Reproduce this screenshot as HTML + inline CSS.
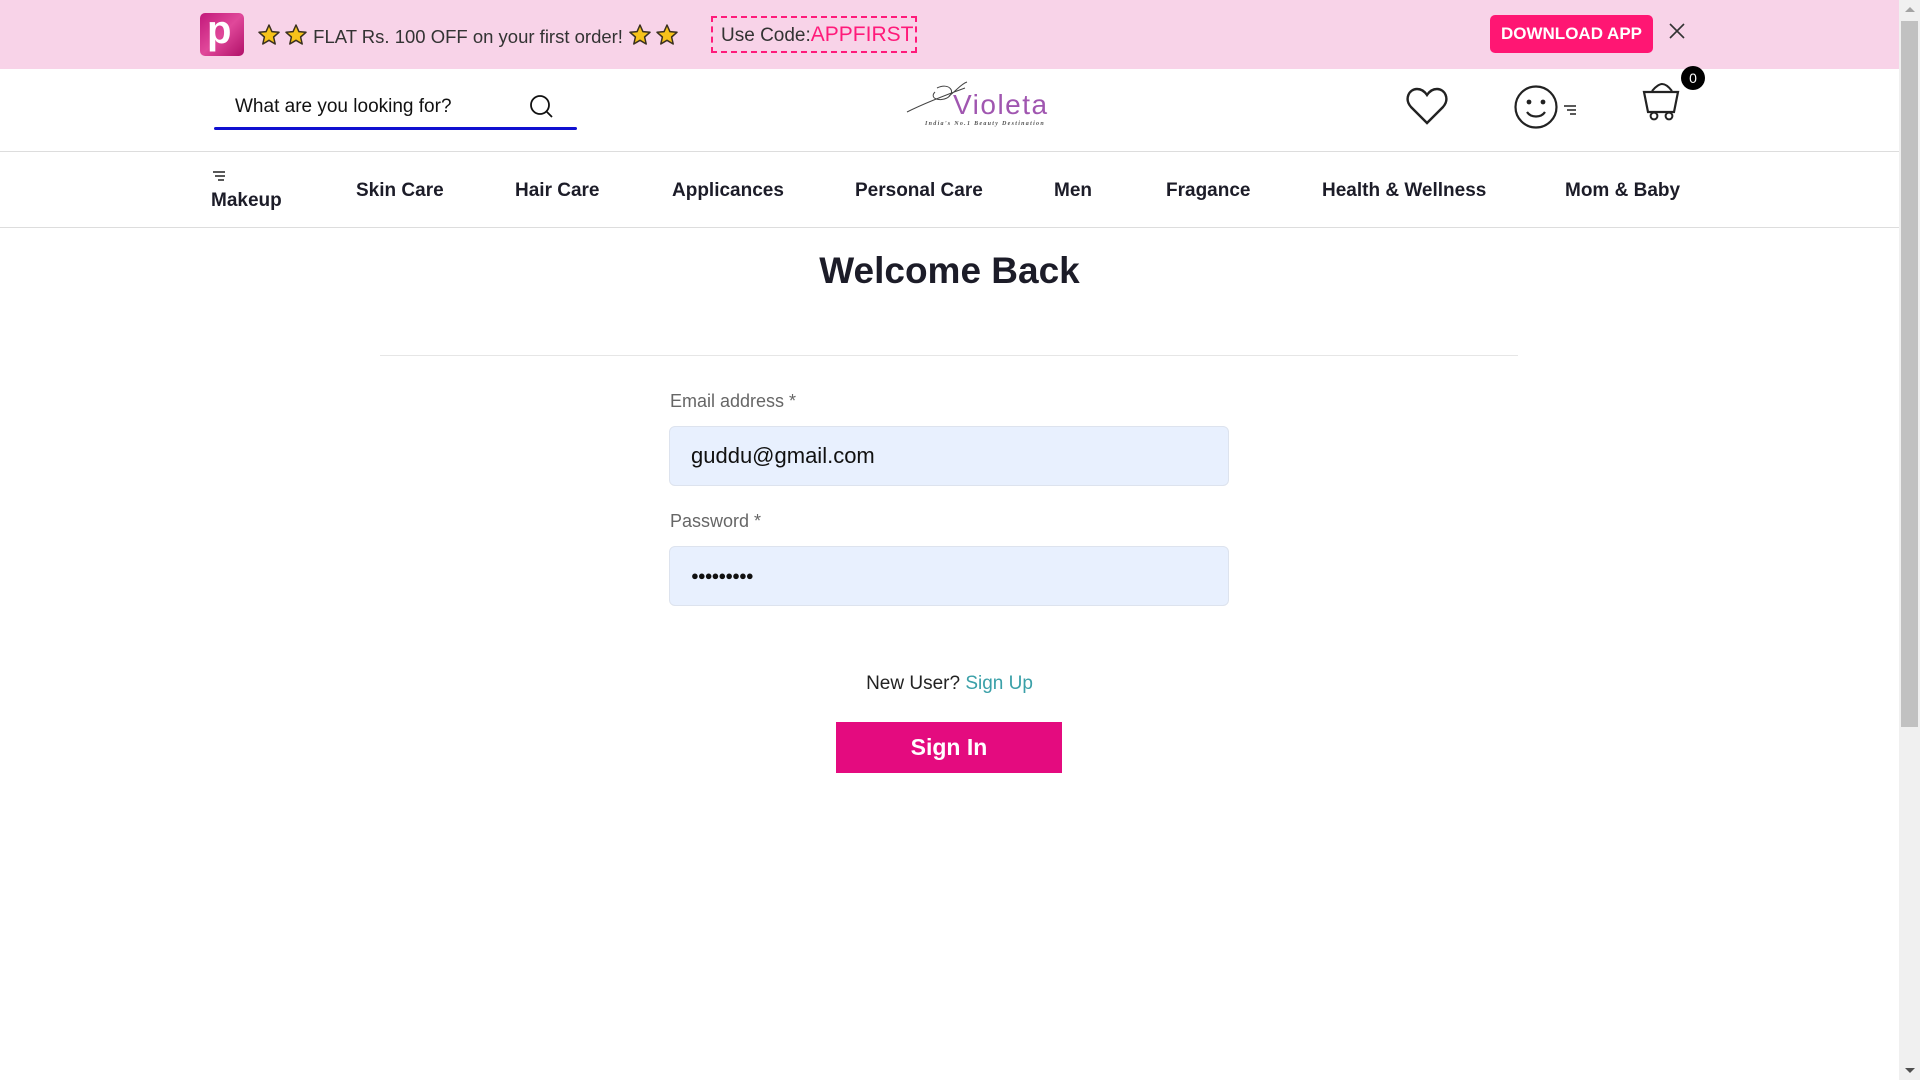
<!DOCTYPE html>
<html><head><meta charset="utf-8"><style>
*{margin:0;padding:0;box-sizing:border-box}
body{width:1920px;height:1080px;overflow:hidden;background:#fff;font-family:"Liberation Sans",sans-serif;color:#212529;position:relative}
.a{position:absolute;white-space:nowrap}
.nav{font-weight:bold;font-size:19px;top:180px;color:#1c1c28}
.st{display:inline-block;vertical-align:-4px}
</style></head><body>
<svg width="0" height="0" style="position:absolute"><defs><symbol id="s" viewBox="0 0 24 24"><path d="M12 2L14.9 8.6L22 9.3L16.6 14L18.2 21L12 17.3L5.8 21L7.4 14L2 9.3L9.1 8.6Z" fill="#f7c21a" stroke="#3a3020" stroke-width="1.5" stroke-linejoin="round"/></symbol></defs></svg>
<div class="a" style="left:0;top:0;width:1899px;height:69px;background:#f8d3e8"></div>
<div class="a" style="left:200px;top:13px;width:44px;height:43px;border-radius:5px;background:linear-gradient(135deg,#c2187a,#e0489a,#b01068)"></div>
<div class="a" style="left:207px;top:8px;color:#fff;font-weight:bold;font-size:40px">p</div>
<div class="a" style="left:257px;top:23px;font-size:18.5px;color:#333"><svg class="st" width="24" height="24"><use href="#s"/></svg><svg class="st" width="24" height="24" style="margin-left:3px"><use href="#s"/></svg> FLAT Rs. 100 OFF on your first order! <svg class="st" width="24" height="24"><use href="#s"/></svg><svg class="st" width="24" height="24" style="margin-left:3px"><use href="#s"/></svg></div>
<div class="a" style="left:711px;top:16px;width:206px;height:37px;border:2px dashed #ff1a7a;font-size:19px;padding:6px 0 0 8px;color:#333;line-height:22px">Use Code:<span style="color:#ff1a7a;font-size:21px">APPFIRST</span></div>
<div class="a" style="left:1490px;top:15px;width:163px;height:38px;background:#ff1673;border-radius:5px;color:#fff;font-size:17px;font-weight:bold;text-align:center;line-height:38px">DOWNLOAD APP</div>
<svg class="a" style="left:1668px;top:22px" width="18" height="18"><path d="M2 2L16 16M16 2L2 16" stroke="#333" stroke-width="1.6"/></svg>
<div class="a" style="left:0;top:151px;width:1899px;height:1px;background:#ddd"></div>
<div class="a" style="left:235px;top:96px;font-size:19px;color:#111">What are you looking for?</div>
<svg class="a" style="left:528px;top:93px" width="28" height="28"><circle cx="12" cy="12" r="9" fill="none" stroke="#111" stroke-width="1.8"/><path d="M18.5 18.5L24 24" stroke="#111" stroke-width="1.8"/></svg>
<div class="a" style="left:214px;top:127px;width:363px;height:3px;background:#1010d0;border-radius:2px"></div>
<svg class="a" style="left:903px;top:80px" width="170" height="48"><path d="M4 32C20 24 40 16 62 8M34 8C46 2 54 12 44 18C36 22 26 18 32 12M46 16C54 10 58 4 64 2" stroke="#444" fill="none" stroke-width="1"/><text x="50" y="34" font-family="Liberation Sans,sans-serif" font-size="28" fill="#a056b0" letter-spacing="1.5">Violeta</text><text x="22" y="45" font-family="Liberation Serif,serif" font-size="6" font-style="italic" font-weight="bold" fill="#555" letter-spacing="1.3">India's No.1 Beauty Destination</text></svg>
<svg class="a" style="left:1405px;top:85px" width="44" height="42"><path d="M22 38L6 22C-1 14 4 4 12 4C17 4 20 7 22 10C24 7 27 4 32 4C40 4 45 14 38 22Z" fill="none" stroke="#222" stroke-width="2.4"/></svg>
<svg class="a" style="left:1514px;top:85px" width="66" height="44"><circle cx="22" cy="22" r="20.5" fill="none" stroke="#222" stroke-width="2.2"/><circle cx="15" cy="17" r="2.4" fill="#222"/><circle cx="29" cy="17" r="2.4" fill="#222"/><path d="M13 27C17 33 27 33 31 27" fill="none" stroke="#222" stroke-width="2.2"/><path d="M50 21h12M53 25h9M56 29h6" stroke="#222" stroke-width="1.6"/></svg>
<svg class="a" style="left:1640px;top:80px" width="44" height="42"><path d="M4 12H38L34 32H8Z" fill="none" stroke="#222" stroke-width="2.2"/><path d="M12 11C16 6 20 4 22 4C26 4 29 7 32 11" fill="none" stroke="#222" stroke-width="2"/><circle cx="14" cy="36" r="3.4" fill="none" stroke="#222" stroke-width="2"/><circle cx="29" cy="36" r="3.4" fill="none" stroke="#222" stroke-width="2"/></svg>
<div class="a" style="left:1681px;top:66px;width:24px;height:24px;border-radius:50%;background:#000;color:#fff;font-size:14px;text-align:center;line-height:24px">0</div>
<div class="a" style="left:0;top:227px;width:1899px;height:1px;background:#ddd"></div>
<svg class="a" style="left:212px;top:170px" width="16" height="12"><path d="M1 2h12M3 6h10M6 10h6" stroke="#222" stroke-width="1.6"/></svg>
<div class="a nav" style="left:211px;top:190px">Makeup</div>
<div class="a nav" style="left:356px">Skin Care</div>
<div class="a nav" style="left:515px">Hair Care</div>
<div class="a nav" style="left:672px">Applicances</div>
<div class="a nav" style="left:855px">Personal Care</div>
<div class="a nav" style="left:1054px">Men</div>
<div class="a nav" style="left:1166px">Fragance</div>
<div class="a nav" style="left:1322px">Health &amp; Wellness</div>
<div class="a nav" style="left:1565px">Mom &amp; Baby</div>
<div class="a" style="left:0;width:1899px;top:250px;text-align:center;font-size:37px;font-weight:bold;color:#1c1c28">Welcome Back</div>
<div class="a" style="left:380px;top:355px;width:1138px;height:1px;background:#e6e6e6"></div>
<div class="a" style="left:670px;top:391px;font-size:18px;color:#666">Email address *</div>
<div class="a" style="left:669px;top:426px;width:560px;height:60px;background:#e8f0fe;border:1px solid #dde3ee;border-radius:6px;font-size:22px;padding:16px 0 0 21px;color:#111">guddu@gmail.com</div>
<div class="a" style="left:670px;top:511px;font-size:18px;color:#666">Password *</div>
<div class="a" style="left:669px;top:546px;width:560px;height:60px;background:#e8f0fe;border:1px solid #dde3ee;border-radius:6px;font-size:13px;padding:21px 0 0 21px;color:#111;letter-spacing:-1px">●●●●●●●●●</div>
<div class="a" style="left:0;width:1899px;top:673px;text-align:center;font-size:19px;color:#222">New User? <span style="color:#3aa0a8">Sign Up</span></div>
<div class="a" style="left:836px;top:722px;width:226px;height:51px;background:#e40b7f;color:#fff;font-size:23px;font-weight:bold;text-align:center;line-height:51px">Sign In</div>
<div class="a" style="left:1899px;top:0;width:21px;height:1080px;background:#f0f0f0"></div>
<div class="a" style="left:1901px;top:21px;width:17px;height:706px;background:#c1c1c1"></div>
<svg class="a" style="left:1903px;top:4px" width="14" height="10"><path d="M2 8L7 3L12 8Z" fill="#a3a3a3"/></svg>
<svg class="a" style="left:1903px;top:1066px" width="14" height="10"><path d="M2 2L7 7L12 2Z" fill="#505050"/></svg>
</body></html>
